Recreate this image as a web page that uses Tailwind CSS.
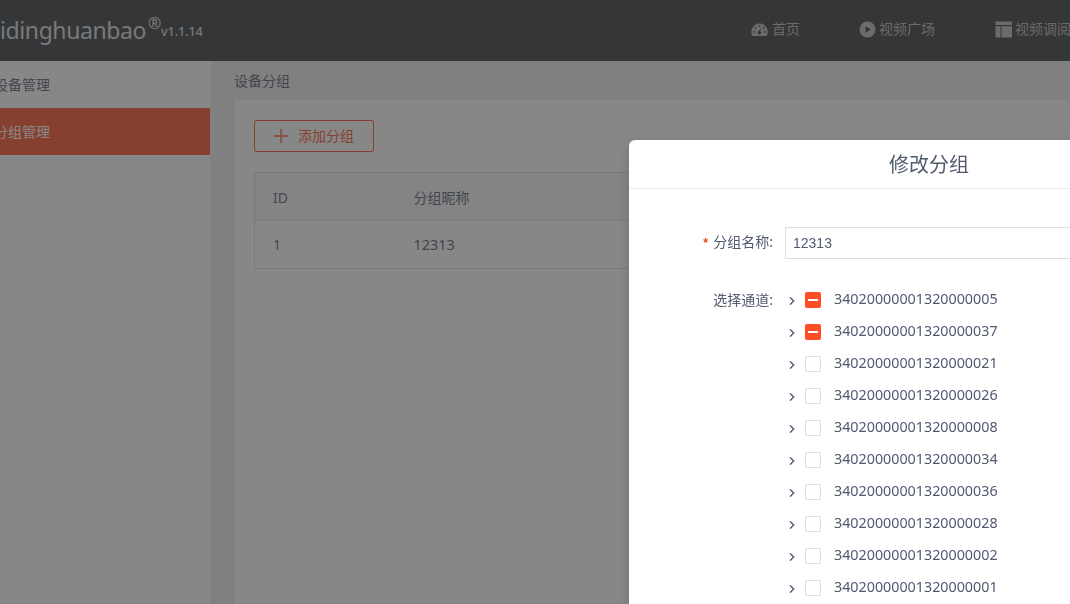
<!DOCTYPE html>
<html lang="zh-CN">
  <head>
    <meta charset="utf-8" />
    <meta name="viewport" content="width=device-width, initial-scale=1" />
    <title>设备分组</title>
    <script src="https://cdn.jsdelivr.net/npm/@tailwindcss/browser@4"></script>
  </head>

  <body class="h-screen overflow-hidden bg-[#eeeeee] font-['Noto_Sans','Noto_Sans_CJK_SC',sans-serif] text-sm text-[#515a6e]">
    <!-- Header -->
    <header class="flex h-[61px] items-center overflow-hidden bg-[#323539] whitespace-nowrap">
      <div class="flex w-[751px] shrink-0 items-center text-[#dddddd]">
        <span id="brand" class="w-[148px] pb-0.5 text-[23px] leading-8 tracking-[-0.4px]">idinghuanbao</span>
        <span class="w-[13px] pb-4 text-base leading-4">®</span>
        <span id="version" class="pt-0.5 text-[12.6px] leading-4 font-medium tracking-[-0.1px]">v1.1.14</span>
      </div>
      <nav class="flex shrink-0 pb-[3px] text-[#b8b8b8]">
        <a class="flex w-[108px] items-center gap-1 leading-5">
          <svg class="size-[17px]" viewBox="0 0 17 17" fill="currentColor">
            <path fill-rule="evenodd" d="M8.5 2.500A8.200 8.200 0 0 0 .3 10.700c0 1.500.4 3 1.100 4.200h14.200c.7-1.200 1.100-2.700 1.100-4.200A8.200 8.200 0 0 0 8.500 2.500ZM2 10.200h1.800v1.300H2ZM13.200 10.200H15v1.300h-1.800ZM3.700 6.100h1.500v1.500H3.700ZM7.800 4h1.400v1.700H7.800ZM11.900 6.100h1.500v1.500h-1.500ZM9.900 6.700l-.7 3.500a1.600 1.600 0 1 1-1.200-.1Z" />
          </svg>
          首页
        </a>
        <a class="flex w-[136px] items-center gap-[3px] leading-5">
          <svg class="size-[17px]" viewBox="0 0 17 17" fill="currentColor">
            <path fill-rule="evenodd" d="M8.500 .5a8 8 0 1 0 0 16a8 8 0 0 0 0-16ZM6.500 5.200v6.600l5.300-3.300Z" />
          </svg>
          视频广场
        </a>
        <a class="flex items-center gap-[3px] leading-5">
          <svg class="size-[17px]" viewBox="0 0 17 17" fill="currentColor">
            <path d="M.5 .5H17v3.500H.5ZM.5 5.200h5v11.300h-5ZM6.500 5.200H17v11.300H6.500Z" />
          </svg>
          视频调阅
        </a>
      </nav>
    </header>

    <div class="flex h-[543px]">
      <!-- Sidebar -->
      <aside class="w-[210px] shrink-0 overflow-hidden bg-white">
        <div class="flex h-[47px] items-center"><span class="-ml-1.5">设备管理</span></div>
        <div class="flex h-[47px] items-center bg-[#ff4d25] text-white"><span class="-ml-1.5">分组管理</span></div>
      </aside>

      <!-- Content -->
      <main class="flex min-w-0 flex-1 flex-col pl-6">
        <h1 class="flex h-[39px] items-center">设备分组</h1>
        <section class="flex-1 overflow-hidden bg-white pt-5 pl-5">
          <button class="flex h-8 w-[120px] items-center gap-2.5 rounded-xs border border-[#ff4d25] pl-[19px] text-[#ff4d25]">
            <svg class="size-3.5" viewBox="0 0 14 14" stroke="currentColor" stroke-width="1.3">
              <path d="M7 0v14M0 7h14" />
            </svg>
            添加分组
          </button>
          <table class="mt-5 w-[900px] table-fixed border border-[#dcdee2] text-left">
            <thead>
              <tr class="h-12 border-b border-[#e3e5e8] bg-[#f8f8f9]">
                <th class="w-[141px] pt-0.5 pl-[18px] font-normal">ID</th>
                <th class="pt-0.5 pl-[18px] font-normal">分组昵称</th>
              </tr>
            </thead>
            <tbody>
              <tr class="h-12">
                <td class="pl-[18px]">1</td>
                <td class="pt-px pl-[18px] text-[14.4px]">12313</td>
              </tr>
            </tbody>
          </table>
        </section>
      </main>
    </div>

    <!-- Mask -->
    <div class="fixed inset-0 bg-[#373737]/60"></div>

    <!-- Modal -->
    <div class="fixed top-[140px] left-[629px] h-[600px] w-[600px] rounded-md bg-white shadow-[0_4px_12px_rgba(0,0,0,0.15)]">
      <div class="flex h-[49px] items-center justify-center border-b border-[#e8eaec] pt-0.5 text-xl">修改分组</div>
      <div class="flex items-center pt-[38px]">
        <label class="w-[156px] pr-3 pb-0.5 text-right leading-[30px]"><span class="mr-1 font-['Liberation_Mono',monospace] text-xs font-bold text-[#ed4014]">*</span>分组名称:</label>
        <input class="h-8 flex-1 border border-[#dcdee2] px-[7px] font-['Liberation_Sans',sans-serif] text-sm" value="12313" />
      </div>
      <div class="flex pt-6">
        <label class="w-[156px] shrink-0 pr-3 text-right leading-[34px]">选择通道:</label>
        <ul id="channels" class="text-[14.3px]"></ul>
      </div>
    </div>

    <script>
      const channels = [
        { id: "34020000001320000005", partial: true },
        { id: "34020000001320000037", partial: true },
        { id: "34020000001320000021" },
        { id: "34020000001320000026" },
        { id: "34020000001320000008" },
        { id: "34020000001320000034" },
        { id: "34020000001320000036" },
        { id: "34020000001320000028" },
        { id: "34020000001320000002" },
        { id: "34020000001320000001" },
      ];

      const partialBox = `<span class="flex size-4 items-center justify-center rounded-xs bg-[#ff4d25]"><span class="h-0.5 w-2.5 bg-white"></span></span>`;
      const emptyBox = `<span class="block size-4 rounded-xs border border-[#dcdee2] bg-white"></span>`;

      document.getElementById("channels").innerHTML = channels
        .map(
          (c) => `
          <li class="flex h-8 items-center">
            <svg class="mt-1 mr-2 ml-1 h-2 w-2" viewBox="0 0 8 8" fill="none" stroke="#515a6e" stroke-width="1.4"><path d="M1 .3 4.700 4 1 7.700" /></svg>
            <span class="mt-0.5 mr-[13px]">${c.partial ? partialBox : emptyBox}</span>
            <span class="leading-8">${c.id}</span>
          </li>`
        )
        .join("");
    </script>
  </body>
</html>
